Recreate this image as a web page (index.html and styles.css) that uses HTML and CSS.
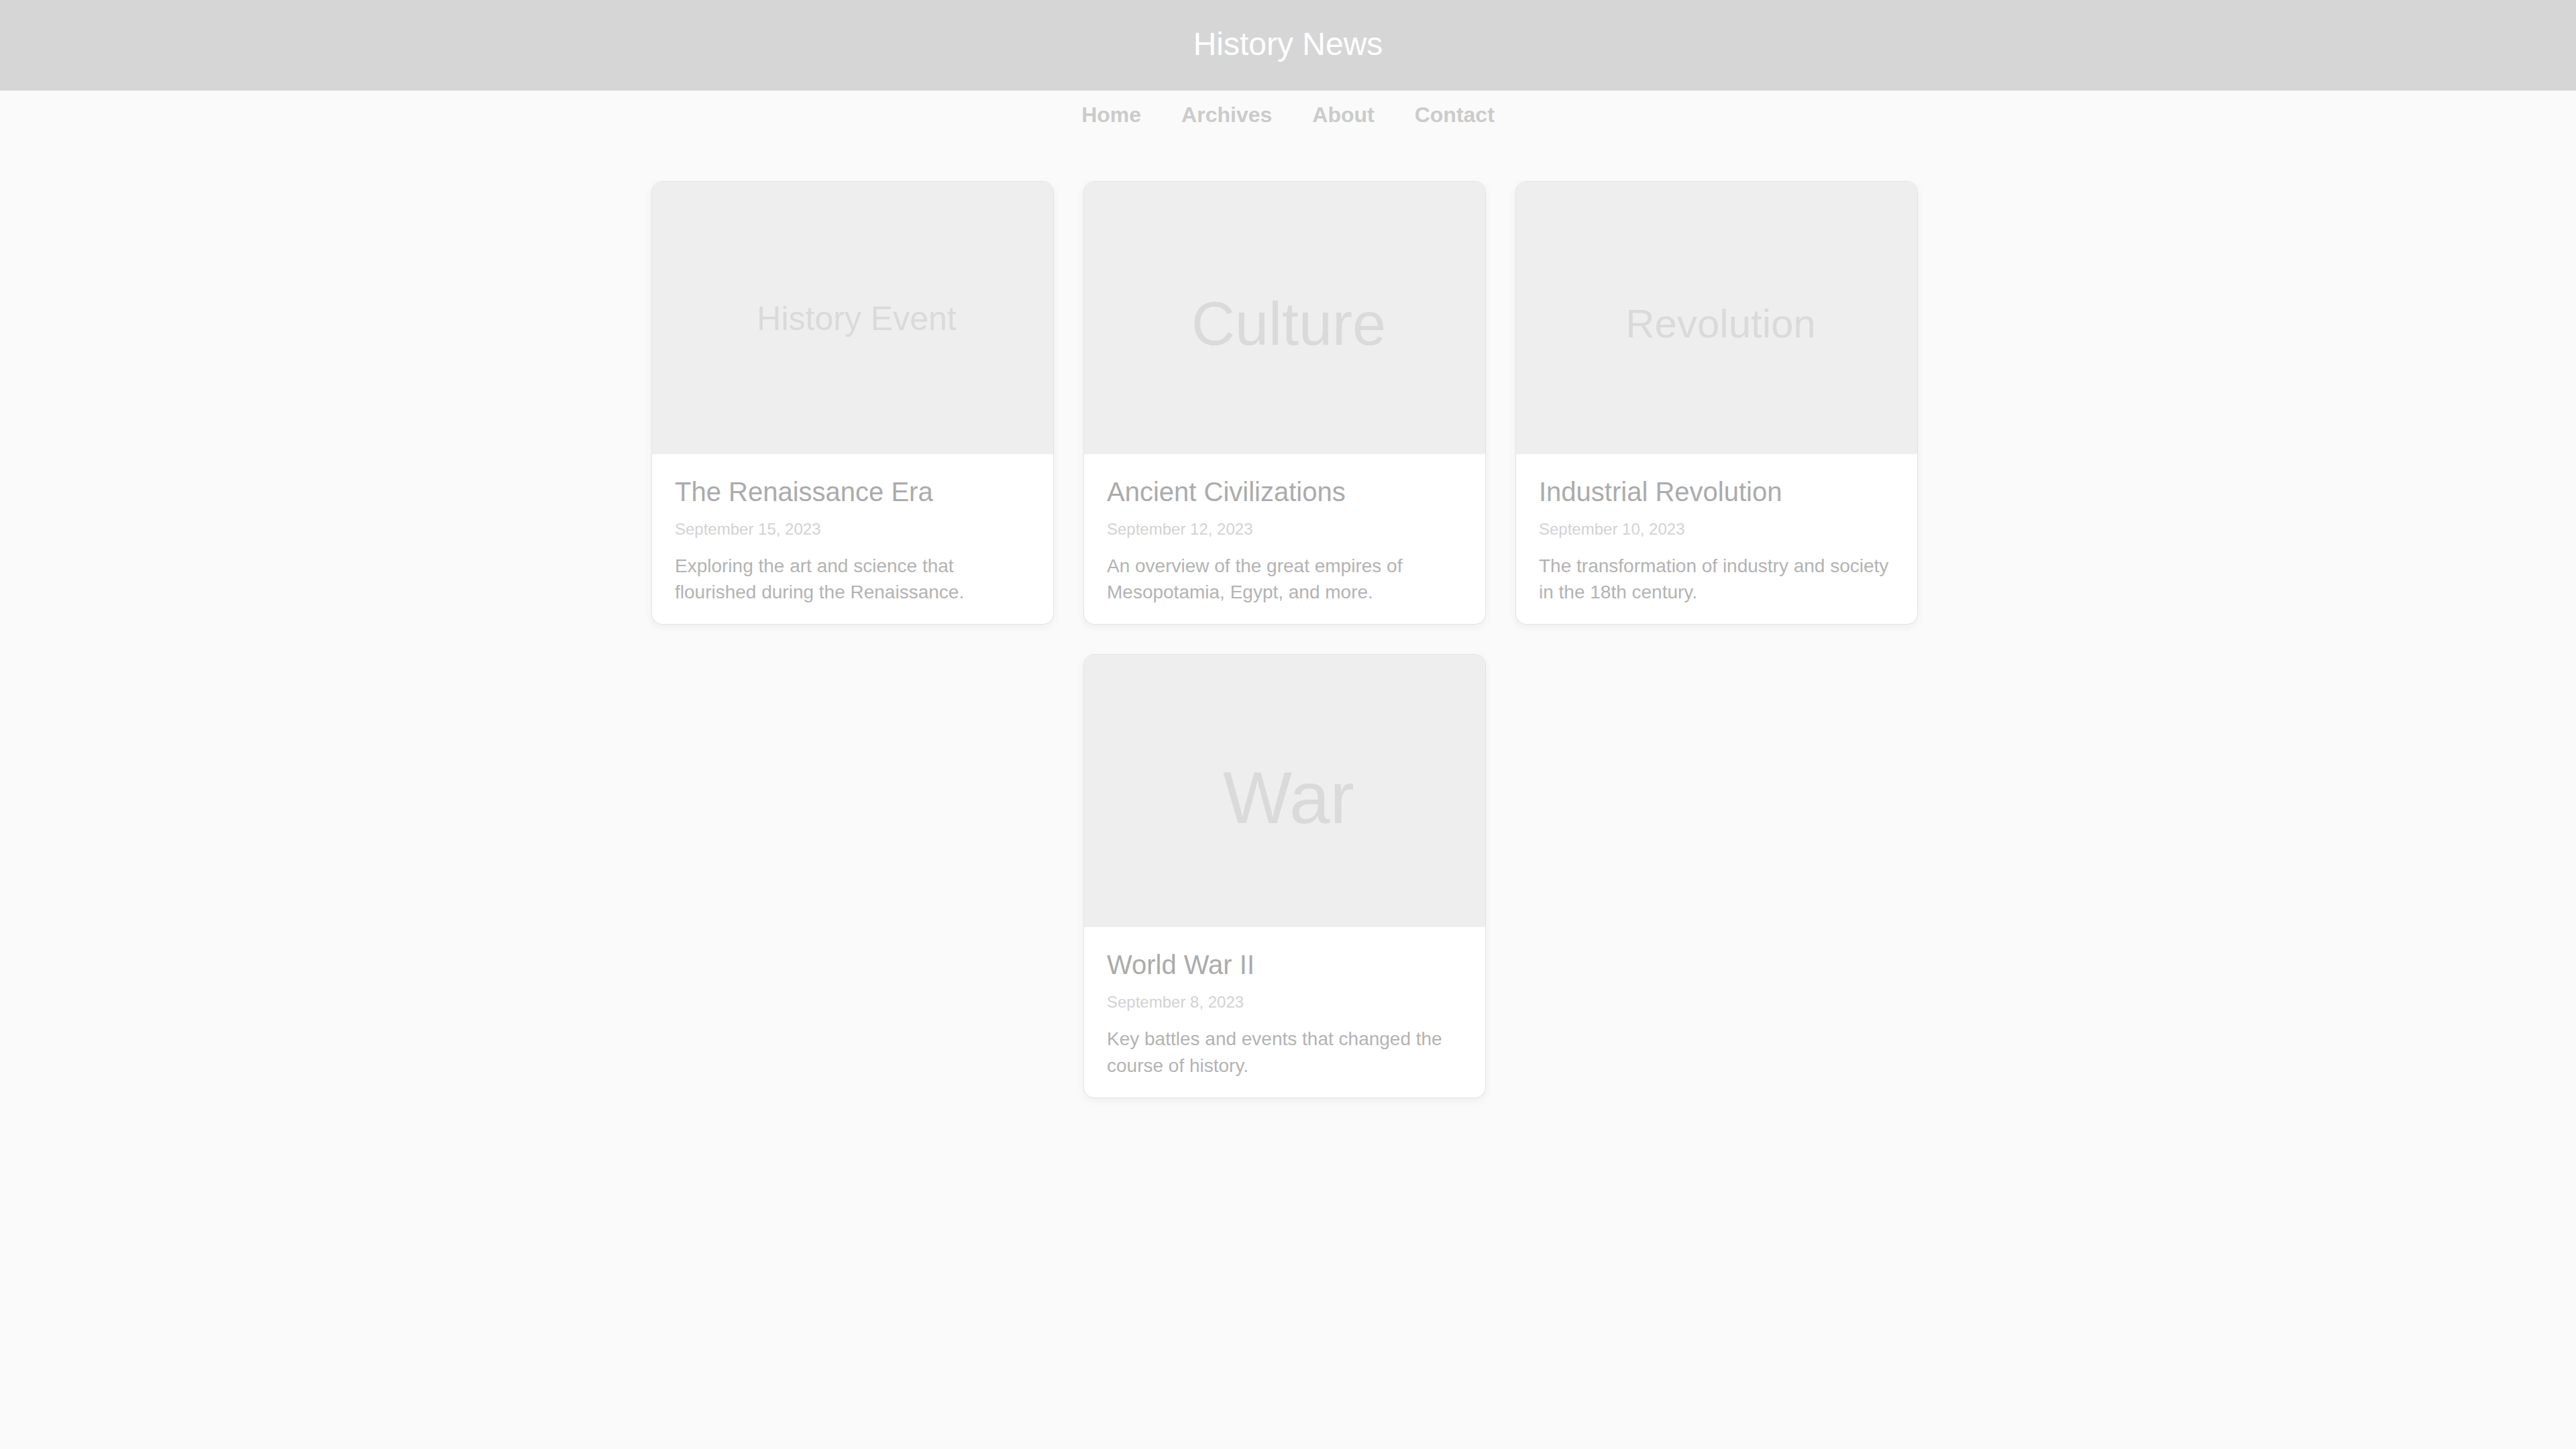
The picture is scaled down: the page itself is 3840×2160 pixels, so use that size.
FILE: index.html
```html
<!DOCTYPE html>
<html>
<head>
    <meta http-equiv="Content-Type" content="text/html; charset=utf-8" />
    <title>History News</title>
    <link rel="stylesheet" href="styles.css">
</head>
<body>
  <header class="site-header">
    <h1>History News</h1>
  </header>

  <nav class="site-nav">
    <a href="#">Home</a>
    <a href="#">Archives</a>
    <a href="#">About</a>
    <a href="#">Contact</a>
  </nav>

  <main class="news">
    <div class="news-list">
      <article class="card">
        <div class="thumb"><span class="thumb-text event">History Event</span></div>
        <div class="card-body">
          <h2>The Renaissance Era</h2>
          <div class="date">September 15, 2023</div>
          <p>Exploring the art and science that flourished during the Renaissance.</p>
        </div>
      </article>

      <article class="card">
        <div class="thumb"><span class="thumb-text culture">Culture</span></div>
        <div class="card-body">
          <h2>Ancient Civilizations</h2>
          <div class="date">September 12, 2023</div>
          <p>An overview of the great empires of Mesopotamia, Egypt, and more.</p>
        </div>
      </article>

      <article class="card">
        <div class="thumb"><span class="thumb-text revolution">Revolution</span></div>
        <div class="card-body">
          <h2>Industrial Revolution</h2>
          <div class="date">September 10, 2023</div>
          <p>The transformation of industry and society in the 18th century.</p>
        </div>
      </article>

      <article class="card">
        <div class="thumb"><span class="thumb-text war">War</span></div>
        <div class="card-body">
          <h2>World War II</h2>
          <div class="date">September 8, 2023</div>
          <p>Key battles and events that changed the course of history.</p>
        </div>
      </article>
    </div>
  </main>
</body>
</html>
```

FILE: styles.css
```css
body {
    margin: 0;
    background-color: #fafafa;
    font-family: "Liberation Sans", Arial, sans-serif;
}

.site-header {
    background-color: #d6d6d6;
    text-align: center;
    padding: 38px 0 42px;
}

.site-header h1 {
    margin: 0;
    font-size: 48px;
    font-weight: normal;
    color: #fff;
}

.site-nav {
    display: flex;
    justify-content: center;
    gap: 60px;
    padding: 18px 0 22px;
}

.site-nav a {
    font-size: 32px;
    font-weight: bold;
    color: #cbcbcb;
    text-decoration: none;
}

.news {
    padding: 58px 10px 80px 0;
}

.news-list {
    display: flex;
    flex-wrap: wrap;
    justify-content: center;
    gap: 44px;
    max-width: 1900px;
    margin: 0 auto;
}

.card {
    box-sizing: border-box;
    width: 600px;
    background-color: #fff;
    border: 1px solid #e3e3e3;
    border-radius: 16px;
    overflow: hidden;
    box-shadow: 0 4px 12px rgba(0, 0, 0, 0.05);
}

.thumb {
    height: 406px;
    padding-left: 12px;
    background-color: #eee;
    display: flex;
    justify-content: center;
    align-items: center;
}

.thumb-text {
    line-height: 1;
    color: #dadada;
}

.thumb-text.event {
    font-size: 50px;
    margin-top: 2px;
}

.thumb-text.culture {
    font-size: 90px;
    margin-top: 17px;
}

.thumb-text.revolution {
    font-size: 60px;
    margin-top: 17px;
}

.thumb-text.war {
    font-size: 109px;
    margin-top: 20px;
}

.card-body {
    padding: 34px 34px 28px;
}

.card-body h2 {
    margin: 0 0 19px;
    font-size: 40px;
    font-weight: normal;
    color: #ababab;
}

.date {
    margin-bottom: 21px;
    font-size: 24px;
    color: #d2d2d2;
}

.card-body p {
    margin: 0;
    font-size: 28px;
    line-height: 1.4;
    color: #b3b3b3;
}
```
